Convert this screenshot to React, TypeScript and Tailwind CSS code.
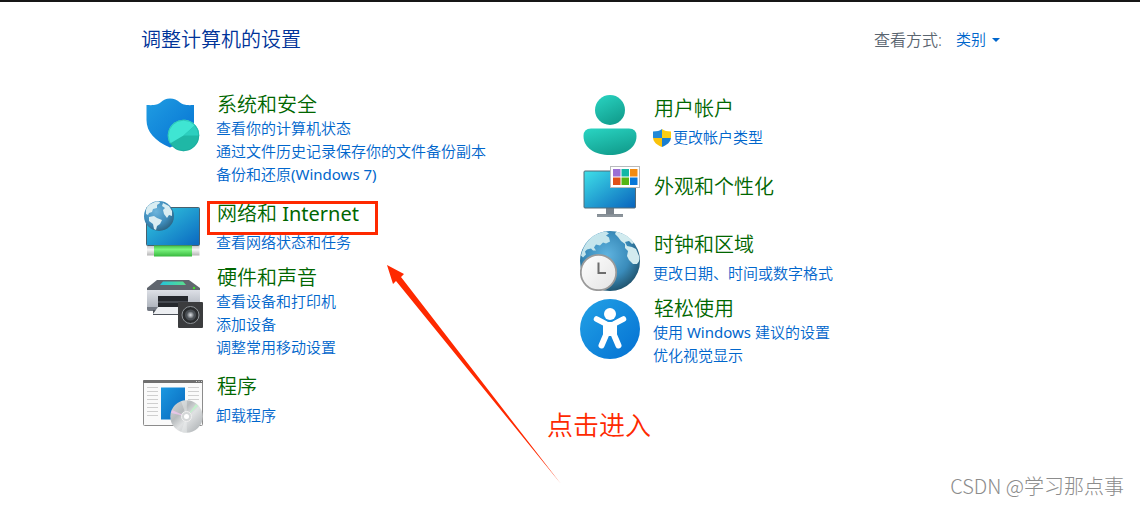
import React from 'react';

interface CategoryProps {
  icon: React.ReactNode;
  title: string;
  links?: string[];
  shield?: boolean;
  highlight?: boolean;
  className?: string;
  iconClassName?: string;
  textClassName?: string;
}

const SecurityIcon = () => (
  <svg viewBox="0 0 60 60" className="h-15 w-15">
    <defs>
      <linearGradient id="sec-shield" x1="0" y1="0" x2="1" y2="1">
        <stop offset="0" stopColor="#209de2" />
        <stop offset="1" stopColor="#0571d2" />
      </linearGradient>
    </defs>
    <path
      d="M27 3.500c4 0 7 1.500 10 4 3.500 2.300 6 3 14 2.500V27c0 12-10 20-24 25.500C12 46 3.500 37 3.500 25V10c8 .5 10.500-.2 14-2.500 3-2.500 5.500-4 9.500-4z"
      fill="url(#sec-shield)"
    />
    <circle cx="40.500" cy="40.500" r="15.700" fill="#1fb8a6" />
    <path d="M40.500 40.500L27 48.500A15.700 15.700 0 0 1 52.300 30.100z" fill="#3fe5d3" />
    <path d="M40.500 40.500L52.300 30.100A15.700 15.700 0 0 1 56.200 40.500z" fill="#2ccfbf" />
    <circle cx="40.500" cy="40.500" r="15.300" fill="none" stroke="#179c95" strokeWidth=".7" opacity=".6" />
  </svg>
);

const NetworkIcon = () => (
  <svg viewBox="0 0 60 60" className="h-15 w-15">
    <defs>
      <linearGradient id="net-screen" x1="0" y1="0" x2="1" y2="1">
        <stop offset="0" stopColor="#35cde0" />
        <stop offset="1" stopColor="#0a67c0" />
      </linearGradient>
      <radialGradient id="net-globe" cx=".4" cy=".35" r=".7">
        <stop offset="0" stopColor="#6db5dc" />
        <stop offset=".6" stopColor="#3f8dbc" />
        <stop offset="1" stopColor="#2a617f" />
      </radialGradient>
      <linearGradient id="net-pipe" x1="0" y1="0" x2="0" y2="1">
        <stop offset="0" stopColor="#3fbf45" />
        <stop offset=".35" stopColor="#7cf580" />
        <stop offset="1" stopColor="#38b83e" />
      </linearGradient>
      <linearGradient id="net-cap" x1="0" y1="0" x2="0" y2="1">
        <stop offset="0" stopColor="#c9c9c9" />
        <stop offset=".4" stopColor="#f5f5f5" />
        <stop offset="1" stopColor="#b4b4b4" />
      </linearGradient>
    </defs>
    <rect x="3.500" y="8.500" width="53" height="38" rx="1" fill="url(#net-screen)" stroke="#48606e" />
    <rect x="4" y="47" width="52.500" height="9.500" fill="url(#net-cap)" />
    <rect x="11" y="46.500" width="38" height="11" fill="url(#net-pipe)" />
    <circle cx="16" cy="17" r="15" fill="url(#net-globe)" />
    <path
      d="M3 11c1-4 4-6 9-8 3-.8 5-.3 5 1l-3 2 0 3-4 1-1 3-3 1-1 2-2-1zM6 18l5-1 3 2 5 2-2 4-3 2-1 4-2-1-1-5-4-3zM20 4l6 3 3 5 0 5-3-1-2 3-3-4-1-4 2-2-3-2z"
      fill="#d9edf2"
    />
  </svg>
);

const HardwareIcon = () => (
  <svg viewBox="0 0 60 60" className="h-15 w-15">
    <defs>
      <linearGradient id="hw-body" x1="0" y1="0" x2="0" y2="1">
        <stop offset="0" stopColor="#dde0e6" />
        <stop offset="1" stopColor="#a5abb5" />
      </linearGradient>
      <linearGradient id="hw-glass" x1="0" y1="0" x2="1" y2="0">
        <stop offset="0" stopColor="#23c4dc" />
        <stop offset="1" stopColor="#5be08c" />
      </linearGradient>
      <radialGradient id="hw-cone">
        <stop offset="0" stopColor="#e0e3e7" />
        <stop offset="1" stopColor="#5b6065" />
      </radialGradient>
    </defs>
    <path d="M14 6h32l11 8v3H4v-3z" fill="#60666e" />
    <path d="M20 7.500h20l3 3.500H17z" fill="url(#hw-glass)" />
    <path d="M4 16h53v19q0 2-2 2H6q-2 0-2-2z" fill="url(#hw-body)" />
    <path d="M4 33h53v2q0 2-2 2H6q-2 0-2-2z" fill="#737983" />
    <circle cx="51" cy="14" r="1.200" fill="#43e12b" />
    <rect x="15" y="22" width="30" height="11" fill="#25282d" />
    <rect x="15" y="27" width="30" height="2" fill="#454950" />
    <path d="M10 36h40v5H10z" fill="#4c5159" />
    <path d="M15 33h24v7H10z" fill="#eceef1" />
    <rect x="35" y="28" width="25" height="26" rx="1" fill="#3b3c3e" />
    <circle cx="47.500" cy="41" r="8.500" fill="#2a2c2e" stroke="#8f9498" />
    <circle cx="47.500" cy="41" r="5.500" fill="#4b5055" />
    <circle cx="47.500" cy="41" r="3.500" fill="url(#hw-cone)" />
  </svg>
);

const ProgramsIcon = () => (
  <svg viewBox="0 0 60 60" className="h-15 w-15">
    <defs>
      <linearGradient id="prg-page" x1="0" y1="0" x2="1" y2="1">
        <stop offset="0" stopColor="#1b98e0" />
        <stop offset="1" stopColor="#0867bd" />
      </linearGradient>
      <linearGradient id="prg-disc" x1="0" y1="0" x2="1" y2="1">
        <stop offset="0" stopColor="#d9dcdd" />
        <stop offset=".35" stopColor="#b7bbbd" />
        <stop offset=".55" stopColor="#e0e2e3" />
        <stop offset="1" stopColor="#a6abae" />
      </linearGradient>
    </defs>
    <rect x=".5" y="4.500" width="59" height="45" rx="1" fill="#fafafa" stroke="#8c8c8c" />
    <rect x="0" y="4" width="60" height="3" rx="1" fill="#6f6f6f" />
    <path d="M53 5.500h1M55.500 5.500h1M58 5.500h1" stroke="#d8d8d8" />
    <path
      d="M4 11.500h11M4 15.500h11M4 19.500h11M4 23.500h11M4 27.500h11M4 31.500h11M4 35.500h11M4 39.500h11M45 11.500h11M45 15.500h11M45 19.500h11M45 23.500h11"
      stroke="#cfcfcf"
    />
    <rect x="18" y="11.500" width="24" height="32" fill="url(#prg-page)" />
    <circle cx="43.500" cy="40.500" r="16.200" fill="url(#prg-disc)" />
    <path d="M43.500 40.500L29 34l-1 3z" fill="#efc6ee" opacity=".8" />
    <path d="M43.500 40.500L53 28l2 2z" fill="#c2efcb" />
    <path d="M43.500 40.500L38 25l6-1zM43.500 40.500L44 57l-6-1z" fill="#f3f4f4" opacity=".4" />
    <circle cx="43.500" cy="40.500" r="5" fill="#d4d7d8" stroke="#f0f0f0" />
    <circle cx="43.500" cy="40.500" r="2.500" fill="#fff" />
  </svg>
);

const UserIcon = () => (
  <svg viewBox="0 0 60 60" className="h-15 w-15">
    <defs>
      <linearGradient id="usr" x1=".2" y1="0" x2=".7" y2="1">
        <stop offset="0" stopColor="#28d1bf" />
        <stop offset="1" stopColor="#119c8c" />
      </linearGradient>
    </defs>
    <circle cx="30" cy="15" r="15" fill="url(#usr)" />
    <path d="M11 33.500h38q7.500 0 7.500 7.500C56.500 53 45 60 30 60S3.500 53 3.500 41q0-7.500 7.500-7.500z" fill="url(#usr)" />
  </svg>
);

const AppearanceIcon = () => (
  <svg viewBox="0 0 60 60" className="h-15 w-15">
    <defs>
      <linearGradient id="app-screen" x1="0" y1="0" x2="1" y2="1">
        <stop offset="0" stopColor="#3fe0e8" />
        <stop offset="1" stopColor="#0963bd" />
      </linearGradient>
    </defs>
    <path d="M26 46h8v6h9v3H17v-3h9z" fill="#7b848c" />
    <path d="M17 52.500h26V55H17z" fill="#8c949b" />
    <rect x="4" y="9" width="51.500" height="37" rx="1" fill="url(#app-screen)" stroke="#536a76" />
    <rect x="30.500" y="4.500" width="29" height="21" fill="#fff" stroke="#b8babc" />
    <path d="M33 7h7.500v7.500H33z" fill="#9b6fd4" />
    <path d="M41.500 7h7.500v7.500h-7.500z" fill="#12b7a6" />
    <path d="M50 7h7.500v7.500H50z" fill="#f28b10" />
    <path d="M33 15.500h7.500V23H33z" fill="#e04f16" />
    <path d="M41.500 15.500h7.500V23h-7.500z" fill="#55b513" />
    <path d="M50 15.500h7.500V23H50z" fill="#0878d8" />
  </svg>
);

const ClockIcon = () => (
  <svg viewBox="0 0 60 60" className="h-15 w-15">
    <defs>
      <radialGradient id="clk-globe" cx=".45" cy=".4" r=".62">
        <stop offset="0" stopColor="#5fb3df" />
        <stop offset=".6" stopColor="#3a8cbb" />
        <stop offset="1" stopColor="#20536d" />
      </radialGradient>
      <linearGradient id="clk-face" x1="0" y1="0" x2="1" y2="1">
        <stop offset="0" stopColor="#fff" />
        <stop offset="1" stopColor="#e3e3e3" />
      </linearGradient>
    </defs>
    <circle cx="30" cy="30" r="30" fill="url(#clk-globe)" />
    <path
      d="M2 21C6 9 14 2 26 .5l3 2-3 2 3 2 1 4-4 2-3-1-3 3-4-1-2 3 2 3-3 0-2-2-4 1-2 2 1 3-3 3-2-2z"
      fill="#c5e5ec"
    />
    <path
      d="M36 .8C43 2 50 6 54 12l-2 1-3-3-4 1 2 4 5 1 4 2 3 7c1 4 0 6-2 8l-4 0-4-4-2-4 1-5-3-3 0-4-4-3-3-4-3-3z"
      fill="#d2ebef"
    />
    <circle cx="18.500" cy="41.500" r="17.700" fill="url(#clk-face)" stroke="#9a9a9a" strokeWidth="1.800" />
    <path d="M18.500 31.500v10.500h7.500" fill="none" stroke="#6d6d6d" strokeWidth="2" />
  </svg>
);

const AccessIcon = () => (
  <svg viewBox="0 0 60 60" className="h-15 w-15">
    <defs>
      <linearGradient id="acc" x1="0" y1="0" x2="1" y2="1">
        <stop offset="0" stopColor="#22a2e6" />
        <stop offset="1" stopColor="#0470d2" />
      </linearGradient>
    </defs>
    <circle cx="30" cy="30" r="30" fill="url(#acc)" />
    <circle cx="30" cy="15" r="6" fill="#fff" />
    <path d="M16.500 20L26 25q4 1.500 8 0l9.500-5" fill="none" stroke="#fff" strokeWidth="5.500" strokeLinecap="round" />
    <path d="M23 25h14v12H23z" fill="#fff" />
    <path d="M26 36l-4.500 10.500M34 36l4.500 10.500" stroke="#fff" strokeWidth="6" strokeLinecap="round" />
  </svg>
);

const UacShield = () => (
  <svg viewBox="0 0 18 18" className="h-[18px] w-[18px] shrink-0">
    <clipPath id="uac">
      <path d="M9 0c2.500 1.800 5 2.500 9 2.500V8c0 5-4 8-9 10-5-2-9-5-9-10V2.500C4 2.500 6.500 1.800 9 0z" />
    </clipPath>
    <g clipPath="url(#uac)">
      <path d="M0 0h9v9H0z" fill="#2389d7" />
      <path d="M9 0h9v9H9z" fill="#fdce12" />
      <path d="M0 9h9v9H0z" fill="#f9c20b" />
      <path d="M9 9h9v9H9z" fill="#1b7fd0" />
    </g>
  </svg>
);

// Latin runs need a heavier cut than the Chinese ones to look even
const Mixed: React.FC<{ text: string }> = ({ text }) => (
  <span>
    {text.split(/([ -~]+)/).map((part, i) =>
      i % 2 ? (
        <span key={i} className="font-normal">
          {part}
        </span>
      ) : (
        part
      )
    )}
  </span>
);

const Category: React.FC<CategoryProps> = ({
  icon,
  title,
  links = [],
  shield,
  highlight,
  className = '',
  iconClassName = '',
  textClassName = '',
}) => {
  return (
    <section className={`flex gap-[13px] ${className}`}>
      <div className={`shrink-0 ${iconClassName}`}>{icon}</div>
      <div className={`relative ${textClassName}`}>
        {highlight && (
          <div className="pointer-events-none absolute top-0 -left-[9px] h-[34px] w-[171px] border-3 border-[#fe2900]" />
        )}
        <h2 className="pl-px text-[20px] leading-[25px] text-[#006600]">
          <a href="#">
            <Mixed text={title} />
          </a>
        </h2>
        {links.length > 0 && (
          <ul className={links.length === 1 ? 'mt-[5px]' : ''}>
            {links.map((link) => (
              <li key={link} className="text-[15px] leading-[23px] text-[#0066cc]">
                <a href="#" className="flex items-center gap-[2px]">
                  {shield && <UacShield />}
                  <Mixed text={link} />
                </a>
              </li>
            ))}
          </ul>
        )}
      </div>
    </section>
  );
};

const App: React.FC = () => {
  return (
    <div className="relative min-h-screen border-t-2 border-[#171717] bg-white px-[140px] pt-[25px] font-['Noto_Sans','Noto_Sans_CJK_SC',sans-serif] font-[350]">
      <header className="flex items-center justify-between">
        <h1 className="pl-px text-[20px] leading-[25px] text-[#003399]">调整计算机的设置</h1>
        <div className="flex items-center gap-[14px]">
          <label htmlFor="view" className="text-[16px] text-[#5a6570]">
            查看方式:
          </label>
          <div className="relative">
            <select id="view" className="block w-11 appearance-none text-[15px] text-[#0066cc]">
              <option>类别</option>
            </select>
            <svg viewBox="0 0 8 4" className="pointer-events-none absolute top-1/2 right-0 h-1 w-2 -translate-y-1/2">
              <path d="M0 0h8L4 4z" fill="#0066cc" />
            </svg>
          </div>
        </div>
      </header>

      <main className="mt-10 grid grid-cols-2 gap-x-[17px] pl-[3px]">
        <div>
          <Category
            icon={<SecurityIcon />}
            title="系统和安全"
            links={['查看你的计算机状态', '通过文件历史记录保存你的文件备份副本', '备份和还原(Windows 7)']}
            iconClassName="mt-[3px]"
          />
          <Category
            icon={<NetworkIcon />}
            title="网络和 Internet"
            links={['查看网络状态和任务']}
            highlight
            className="mt-[13px]"
            textClassName="mt-[2px]"
          />
          <Category
            icon={<HardwareIcon />}
            title="硬件和声音"
            links={['查看设备和打印机', '添加设备', '调整常用移动设置']}
            className="mt-[6px]"
            iconClassName="mt-[9px]"
          />
          <Category
            icon={<ProgramsIcon />}
            title="程序"
            links={['卸载程序']}
            className="mt-[15px]"
            iconClassName="mt-[2px]"
          />
        </div>
        <div className="pt-[3px]">
          <Category icon={<UserIcon />} title="用户帐户" links={['更改帐户类型']} shield textClassName="mt-[1px]" />
          <Category icon={<AppearanceIcon />} title="外观和个性化" className="mt-[7px]" textClassName="mt-3" />
          <Category
            icon={<ClockIcon />}
            title="时钟和区域"
            links={['更改日期、时间或数字格式']}
            className="mt-[9px]"
            textClassName="mt-[1px]"
          />
          <Category
            icon={<AccessIcon />}
            title="轻松使用"
            links={['使用 Windows 建议的设置', '优化视觉显示']}
            className="mt-[5px]"
            iconClassName="mt-[3px]"
          />
        </div>
      </main>

      <svg viewBox="0 0 176 220" className="pointer-events-none absolute top-[263px] left-[387px] h-[220px] w-[176px]">
        <path d="M0 0l17 9-3 3 160 207L9 16l-3 3z" fill="#fe2900" />
      </svg>
      <p className="absolute top-[407px] left-[547px] text-[26px] leading-8 text-[#fe2900]">点击进入</p>
      <p className="absolute right-4 bottom-2 font-['Noto_Sans_CJK_SC',sans-serif] text-[20px] leading-6 font-light text-[#8c8c8c]">
        CSDN @学习那点事
      </p>
    </div>
  );
};

export default App;
